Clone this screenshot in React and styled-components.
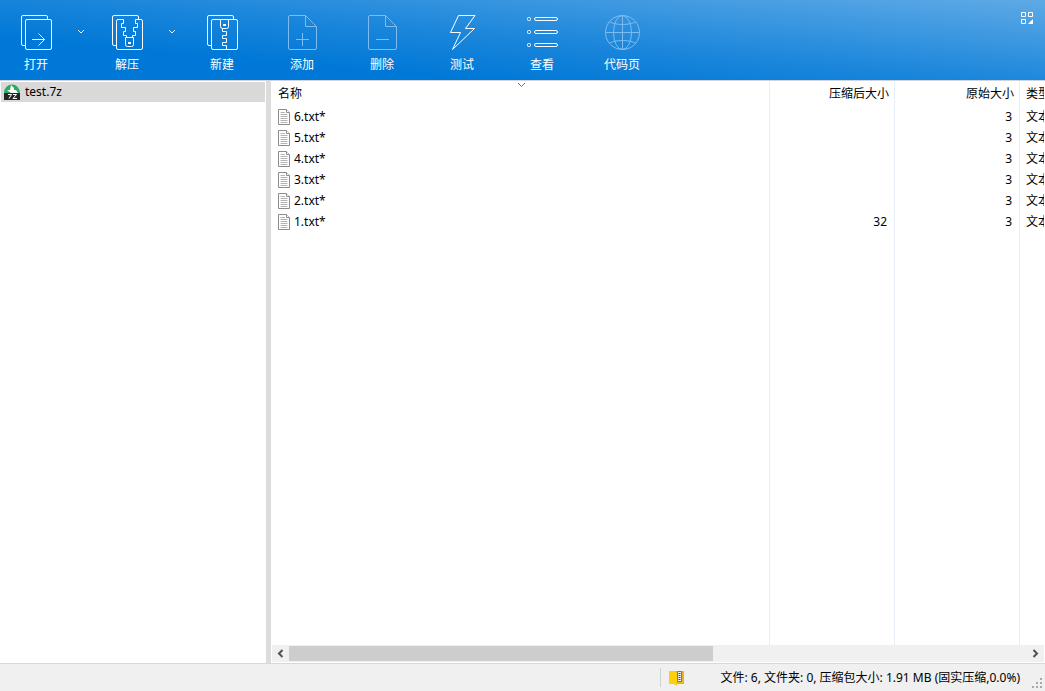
import React, { useRef, useState } from "react";
import styled, { createGlobalStyle, css } from "styled-components";

const GlobalStyle = createGlobalStyle`
  * {
    box-sizing: border-box;
  }
  body {
    margin: 0;
    background-color: #ffffff;
    color: #000000;
    font-family: "Noto Sans", "Noto Sans CJK SC", sans-serif;
    font-size: 12px;
    line-height: 16px;
  }
  button {
    padding: 0;
    border: none;
    background: none;
    color: inherit;
    font: inherit;
  }
`;

const Window = styled.div`
  display: flex;
  flex-direction: column;
  height: 100vh;
  overflow: hidden;
`;

const Toolbar = styled.header`
  display: flex;
  flex: none;
  align-items: flex-start;
  height: 80px;
  background: linear-gradient(
      185deg,
      rgba(255, 255, 255, 0.37),
      rgba(255, 255, 255, 0.1) 50%,
      rgba(255, 255, 255, 0) 76%
    ),
    #0078d7;
  color: #ffffff;
`;

const ToolButton = styled.button`
  display: flex;
  flex-direction: column;
  align-items: center;
  gap: 7px;
  width: ${(props) => (props.$narrow ? "72px" : "80px")};
  height: 80px;
  padding-top: 15px;
  white-space: nowrap;
`;

const ArrowButton = styled.button`
  display: flex;
  justify-content: center;
  width: 19px;
  height: 80px;
  padding-top: 29px;
`;

const Icon = styled.svg`
  display: block;
  flex: none;
  fill: none;
  stroke: ${(props) => (props.$dim ? "#7dbcf0" : "#ffffff")};
`;

const ModeButton = styled.button`
  margin-left: auto;
  padding: 12px 11px 12px 8px;
`;

const Main = styled.main`
  display: flex;
  flex: 1;
  min-height: 0;
  border-top: 1px solid #d0d4da;
`;

const Sidebar = styled.nav`
  flex: none;
  width: 266px;
  padding: 1px;
`;

const TreeItem = styled.a`
  display: flex;
  align-items: center;
  gap: 5px;
  height: 20px;
  padding-left: 3px;
  background-color: #d9d9d9;
  color: inherit;
  text-decoration: none;
`;

const Splitter = styled.div`
  flex: none;
  width: 5px;
  background-color: #dcdcdc;
`;

const ListPane = styled.section`
  display: flex;
  flex: 1;
  flex-direction: column;
  min-width: 0;
  padding: 0 1px 1px;
`;

const ListView = styled.div`
  flex: 1;
  min-height: 0;
  overflow: auto;
  scrollbar-width: none;
`;

const FileTable = styled.table`
  width: 1345px;
  height: 100%;
  border-collapse: separate;
  border-spacing: 0;
  table-layout: fixed;
`;

const cell = css`
  overflow: hidden;
  padding: 0 6px;
  border-right: 1px solid #e8eef7;
  font-weight: normal;
  text-align: ${(props) => (props.$right ? "right" : "left")};
  white-space: nowrap;
`;

const HeadCell = styled.th`
  ${cell}
  position: relative;
  height: 25px;
  padding-right: 5px;
`;

const SortMark = styled.svg`
  position: absolute;
  top: 1px;
  left: 50%;
  margin-left: -4px;
  fill: none;
  stroke: #6d6d6d;
`;

const Cell = styled.td`
  ${cell}
  height: 21px;
  padding-right: 7px;
`;

const FillCell = styled.td`
  ${cell}
`;

const FileName = styled.div`
  display: flex;
  align-items: center;
  gap: 3px;
`;

const ScrollBar = styled.div`
  display: flex;
  flex: none;
  height: 17px;
  background-color: #f0f0f0;
`;

const ScrollButton = styled.button`
  display: flex;
  align-items: center;
  justify-content: center;
  width: 17px;
`;

const ScrollArrow = styled(Icon)`
  stroke: #505050;
  stroke-width: 2;
`;

const Track = styled.div`
  flex: 1;
  padding: 1px 0;
`;

const Thumb = styled.div`
  width: 57.5%;
  height: 15px;
  background-color: #cdcdcd;
`;

const StatusBar = styled.footer`
  display: flex;
  flex: none;
  justify-content: flex-end;
  height: 28px;
  border-top: 1px solid #d7d7d7;
  background-color: #f0f0f0;
`;

const StatusPanel = styled.div`
  display: flex;
  align-items: center;
  gap: 36px;
  margin: 4px 0;
  padding-left: 8px;
  border-left: 1px solid #d2d2d2;
  white-space: nowrap;
`;

const Grip = styled.svg`
  align-self: flex-end;
  margin: 0 3px 3px 12px;
  fill: #a8a8a8;
`;

const back = "M4 30.5H2A1.5 1.5 0 0 1 .5 29V2A1.5 1.5 0 0 1 2 .5h23A1.5 1.5 0 0 1 26.5 2v2";

const OpenIcon = () => (
  <Icon width="31" height="35">
    <path d={back} />
    <rect x="4.5" y="4.5" width="26" height="30" rx="1.5" />
    <path d="M11 24.5h12.5M17.5 18.5l6 6-6 6" />
  </Icon>
);

const ExtractIcon = () => (
  <Icon width="31" height="35">
    <path d={back} />
    <path d="M11.5 4.5H6A1.5 1.5 0 0 0 4.5 6v27A1.5 1.5 0 0 0 6 34.5h23a1.5 1.5 0 0 0 1.5-1.5V6A1.5 1.5 0 0 0 29 4.5h-5.5" />
    <path d="M11.5 4.5v4h-2v4h4v4h-2v4h3v2M23.5 4.5v4h2v4h-4v4h2v4h-3v2" />
    <path d="M13.5 22.5h8v7a2 2 0 0 1-2 2h-4a2 2 0 0 1-2-2z" />
    <path d="M16 28h3" strokeWidth="2" />
  </Icon>
);

const NewIcon = () => (
  <Icon width="31" height="35">
    <path d={back} />
    <rect x="4.5" y="4.5" width="26" height="30" rx="1.5" />
    <path d="M13.5 4.5v7a2 2 0 0 0 2 2h4a2 2 0 0 0 2-2v-7" />
    <path d="M16 10h3" strokeWidth="2" />
    <path d="M15.5 13.5v3h4v4h-4v3h4v4h-4v3h4v4" />
  </Icon>
);

const PageIcon = ({ children }) => (
  <Icon width="29" height="35" $dim>
    <path d="M17.5.5H2A1.5 1.5 0 0 0 .5 2v31A1.5 1.5 0 0 0 2 34.5h25a1.5 1.5 0 0 0 1.5-1.5V11.5zv11h11" />
    {children}
  </Icon>
);

const AddIcon = () => (
  <PageIcon>
    <path d="M8 24.5h13M14.5 18v13" />
  </PageIcon>
);

const DeleteIcon = () => (
  <PageIcon>
    <path d="M8 24.5h13" />
  </PageIcon>
);

const TestIcon = () => (
  <Icon width="28" height="35">
    <path d="M10.5.5H27L17.5 13.5h9L4.5 34.5l8-17H2.500z" />
  </Icon>
);

const ViewIcon = () => (
  <Icon width="32" height="35">
    {[4, 17, 30].map((y) => (
      <g key={y}>
        <rect x="1.5" y={y - 1.5} width="3" height="3" rx="1" />
        <rect x="8.5" y={y - 1.5} width="23" height="3" rx="1.5" />
      </g>
    ))}
  </Icon>
);

const CodePageIcon = () => (
  <Icon width="35" height="35" $dim>
    <circle cx="17.5" cy="17.5" r="17" />
    <ellipse cx="17.5" cy="17.5" rx="9" ry="17" />
    <path d="M17.5.5v34M.5 17.5h34M4.5 7c7 3.3 19 3.3 26 0M4.5 28c7-3.3 19-3.3 26 0" />
  </Icon>
);

const ArchiveIcon = () => (
  <svg width="16" height="16">
    <path d="M0 9a8 8.500 0 0 1 16 0z" fill="#2fa866" />
    <path d="M7 1l3 3v2h2l2 3H7L3 6h3z" fill="#ffffff" />
    <rect y="9" width="16" height="7" fill="#262626" />
    <path d="M4 10.500h3.500L5 14.500M9 10.500h3.500L9 14.500h4" fill="none" stroke="#ffffff" />
  </svg>
);

const TextFileIcon = () => (
  <svg width="13" height="16" fill="#ffffff" stroke="#8c8c8c">
    <path d="M.5.5h8l3 3v12H.5z" />
    <path d="M8.500.5v3h3" />
    <path d="M2.500 3.500H7M2.500 5.500h7M2.500 7.500h7M2.500 9.500h7M2.500 11.500h7M2.500 13.500h7" stroke="#b4b4b4" />
  </svg>
);

const ZipFolderIcon = () => (
  <svg width="16" height="16">
    <path d="M1 1h14v13H1z" fill="#eab41e" />
    <path d="M8.500 1.500h4v10h-4z" fill="#f4f4f4" stroke="#777777" />
    <path d="M10.500 3v8" stroke="#444444" strokeWidth="2" strokeDasharray="1 1" />
    <path d="M0 1h6l2 2v13l-3-2H0z" fill="#ffcf08" />
  </svg>
);

const Chevron = () => (
  <Icon width="9" height="6">
    <path d="M1 1l3 3 3-3" />
  </Icon>
);

const tools = [
  { label: "打开", icon: <OpenIcon />, menu: true },
  { label: "解压", icon: <ExtractIcon />, menu: true },
  { label: "新建", icon: <NewIcon /> },
  { label: "添加", icon: <AddIcon /> },
  { label: "删除", icon: <DeleteIcon /> },
  { label: "测试", icon: <TestIcon /> },
  { label: "查看", icon: <ViewIcon /> },
  { label: "代码页", icon: <CodePageIcon /> },
];

const files = [
  { name: "6.txt*", packed: "", size: 3 },
  { name: "5.txt*", packed: "", size: 3 },
  { name: "4.txt*", packed: "", size: 3 },
  { name: "3.txt*", packed: "", size: 3 },
  { name: "2.txt*", packed: "", size: 3 },
  { name: "1.txt*", packed: 32, size: 3 },
];

const FileList = () => {
  const view = useRef(null);
  const [left, setLeft] = useState(0);
  const onScroll = (e) =>
    setLeft((e.target.scrollLeft / e.target.clientWidth) * 100);

  return (
    <ListPane>
      <ListView ref={view} onScroll={onScroll}>
        <FileTable>
          <colgroup>
            <col width="498" />
            <col width="125" />
            <col width="125" />
            <col />
          </colgroup>
          <thead>
            <tr>
              <HeadCell>
                名称
                <SortMark width="9" height="6">
                  <path d="M1 1l3.500 3.500L8 1" />
                </SortMark>
              </HeadCell>
              <HeadCell $right>压缩后大小</HeadCell>
              <HeadCell $right>原始大小</HeadCell>
              <HeadCell>类型</HeadCell>
            </tr>
          </thead>
          <tbody>
            {files.map((file) => (
              <tr key={file.name}>
                <Cell>
                  <FileName>
                    <TextFileIcon />
                    {file.name}
                  </FileName>
                </Cell>
                <Cell $right>{file.packed}</Cell>
                <Cell $right>{file.size}</Cell>
                <Cell>文本文档</Cell>
              </tr>
            ))}
            <tr>
              <FillCell />
              <FillCell />
              <FillCell />
              <FillCell />
            </tr>
          </tbody>
        </FileTable>
      </ListView>
      <ScrollBar>
        <ScrollButton
          aria-label="Scroll left"
          onClick={() => view.current.scrollBy(-40, 0)}
        >
          <ScrollArrow width="7" height="9">
            <path d="M5.500 1L2 4.500 5.500 8" />
          </ScrollArrow>
        </ScrollButton>
        <Track>
          <Thumb style={{ transform: `translateX(${left}%)` }} />
        </Track>
        <ScrollButton
          aria-label="Scroll right"
          onClick={() => view.current.scrollBy(40, 0)}
        >
          <ScrollArrow width="7" height="9">
            <path d="M1.500 1L5 4.500 1.500 8" />
          </ScrollArrow>
        </ScrollButton>
      </ScrollBar>
    </ListPane>
  );
};

const App = () => (
  <Window>
    <GlobalStyle />
    <Toolbar>
      {tools.map((tool) => (
        <React.Fragment key={tool.label}>
          <ToolButton $narrow={tool.menu}>
            {tool.icon}
            {tool.label}
          </ToolButton>
          {tool.menu && (
            <ArrowButton aria-label={tool.label}>
              <Chevron />
            </ArrowButton>
          )}
        </React.Fragment>
      ))}
      <ModeButton aria-label="Mode">
        <Icon width="13" height="12">
          <path d="M.5.5h4v4h-4zM7.500.5h4v4h-4zM.5 7.500h4v4h-4z" />
          <path d="M12 7v5H7z" fill="#ffffff" stroke="none" />
        </Icon>
      </ModeButton>
    </Toolbar>
    <Main>
      <Sidebar>
        <TreeItem href="#test">
          <ArchiveIcon />
          test.7z
        </TreeItem>
      </Sidebar>
      <Splitter />
      <FileList />
    </Main>
    <StatusBar>
      <StatusPanel>
        <ZipFolderIcon />
        文件: 6, 文件夹: 0, 压缩包大小: 1.91 MB (固实压缩,0.0%)
      </StatusPanel>
      <Grip width="10" height="10">
        <path d="M8 0h2v2H8zM8 4h2v2H8zM4 4h2v2H4zM8 8h2v2H8zM4 8h2v2H4zM0 8h2v2H0z" />
      </Grip>
    </StatusBar>
  </Window>
);

export default App;
